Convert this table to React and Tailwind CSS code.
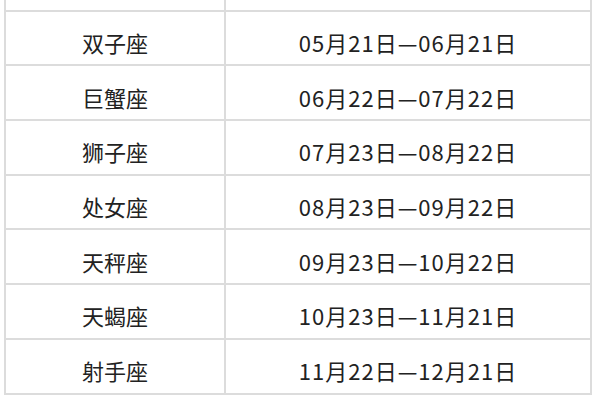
const rows = [
  ['金牛座', '04月20日—05月20日'],
  ['双子座', '05月21日—06月21日'],
  ['巨蟹座', '06月22日—07月22日'],
  ['狮子座', '07月23日—08月22日'],
  ['处女座', '08月23日—09月22日'],
  ['天秤座', '09月23日—10月22日'],
  ['天蝎座', '10月23日—11月21日'],
  ['射手座', '11月22日—12月21日'],
];

export default function App() {
  return (
    <div
      className="h-[400px] w-[600px] overflow-hidden bg-white text-[22px] text-[#222]"
      style={{ fontFamily: '"Noto Sans CJK SC", "Noto Sans", sans-serif' }}
    >
      <div className="-mt-[43px] ml-[4px] w-[588px] border-x-2 border-[#dcdcdc]">
        {rows.map(([sign, range]) => (
          <div key={sign} className="flex h-[54.7px] border-b-2 border-[#dcdcdc]">
            <div className="flex w-[220px] items-center justify-center border-r-2 border-[#dcdcdc] pt-[9px]">
              {sign}
            </div>
            <div className="flex flex-1 items-center justify-center pt-[9px] tracking-[1px]">{range}</div>
          </div>
        ))}
      </div>
    </div>
  );
}
